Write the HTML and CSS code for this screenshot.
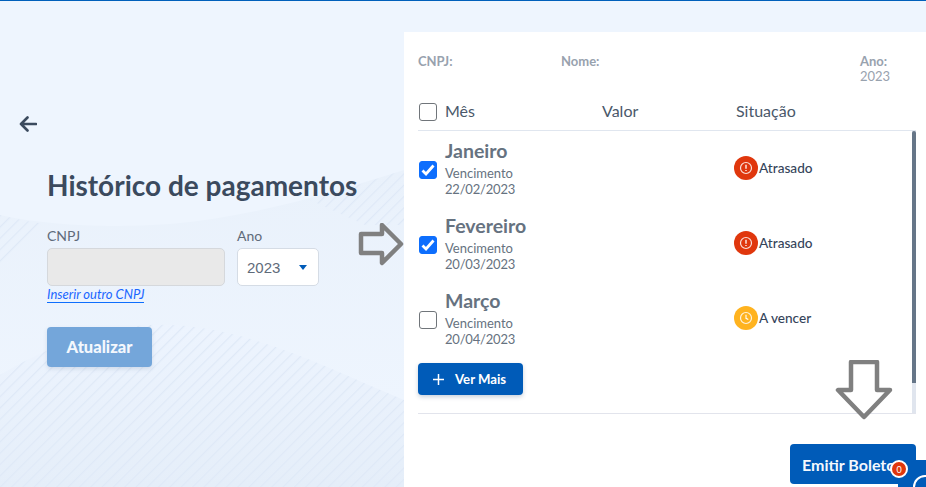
FILE: index.html
```html
<!DOCTYPE html>
<html lang="pt-BR">
<head>
<meta charset="utf-8">
<title>Histórico de pagamentos</title>
<link rel="stylesheet" href="styles.css">
</head>
<body>
<div class="page">
  <svg class="bg-art" width="404" height="487" viewBox="0 0 404 487" aria-hidden="true">
    <defs>
      <pattern id="hatch" width="8" height="8" patternUnits="userSpaceOnUse" patternTransform="rotate(45)">
        <rect width="1.300" height="8" fill="#dfe9f7"/>
      </pattern>
      <linearGradient id="fade" x1="0" y1="0" x2="0" y2="1">
        <stop offset="0" stop-color="#e9f1fb"/>
        <stop offset="1" stop-color="#eef5fe"/>
      </linearGradient>
      <linearGradient id="deep" x1="0" y1="0" x2="0" y2="1">
        <stop offset="0" stop-color="#edf4fe"/>
        <stop offset="1" stop-color="#e5eef9"/>
      </linearGradient>
    </defs>
    <path d="M0 215 C50 226 110 228 170 224 C260 216 340 190 404 170 V400 H0 Z" fill="url(#fade)"/>
    <path d="M0 375 C50 345 100 328 150 325 C240 322 320 365 404 400 V487 H0 Z" fill="url(#deep)"/>
    <path d="M0 375 C50 345 100 328 150 325 C240 322 320 365 404 400 V487 H0 Z" fill="url(#hatch)"/>
    <path d="M0 215 C15 219 30 222 45 224 L0 270 Z" fill="url(#hatch)"/>
    <path d="M310 200 C340 191 370 181 404 170 V225 L365 225 Z" fill="url(#hatch)"/>
  </svg>
  <main class="left">
    <button class="back" type="button" aria-label="Voltar">
      <svg width="18" height="16" viewBox="0 0 18 16"><path d="M17 8H2M8.500 1.500 2 8l6.500 6.500" fill="none" stroke="#3b4a5e" stroke-width="2.600" stroke-linecap="round" stroke-linejoin="round"/></svg>
    </button>
    <h1 class="title">Histórico de pagamentos</h1>
    <div class="fields">
      <div class="field">
        <label class="label">CNPJ</label>
        <div class="input"></div>
        <a class="link" href="#">Inserir outro CNPJ</a>
      </div>
      <div class="field">
        <label class="label">Ano</label>
        <div class="select"><span>2023</span><i class="caret"></i></div>
      </div>
    </div>
    <button class="btn-update" type="button">Atualizar</button>
  </main>
  <section class="panel">
    <div class="meta">
      <div class="meta-cnpj"><b>CNPJ:</b></div>
      <div class="meta-nome"><b>Nome:</b></div>
      <div class="meta-ano"><b>Ano:</b><br>2023</div>
    </div>
    <div class="head">
      <span class="check check-head"></span>
      <span class="col-mes">Mês</span>
      <span class="col-valor">Valor</span>
      <span class="col-sit">Situação</span>
    </div>
    <div class="list">
      <div class="rows">
        <div class="row">
          <span class="check check-row on"><svg width="14" height="12" viewBox="0 0 14 12"><path d="M1.500 6.500 5 10l7.500-8.500" fill="none" stroke="#fff" stroke-width="2.800"/></svg></span>
          <div class="month"><div class="name">Janeiro</div><div class="due">Vencimento<br><span class="date">22/02/2023</span></div></div>
          <div class="status"><span class="dot red"><svg width="14" height="14" viewBox="0 0 14 14"><circle cx="7" cy="7" r="5.500" fill="none" stroke="#fff" stroke-opacity=".85" stroke-width="1.200"/><path d="M7 3.800v3.900M7 9v1" stroke="#fff" stroke-width="1.300"/></svg></span>Atrasado</div>
        </div>
        <div class="row">
          <span class="check check-row on"><svg width="14" height="12" viewBox="0 0 14 12"><path d="M1.500 6.500 5 10l7.500-8.500" fill="none" stroke="#fff" stroke-width="2.800"/></svg></span>
          <div class="month"><div class="name">Fevereiro</div><div class="due">Vencimento<br><span class="date">20/03/2023</span></div></div>
          <div class="status"><span class="dot red"><svg width="14" height="14" viewBox="0 0 14 14"><circle cx="7" cy="7" r="5.500" fill="none" stroke="#fff" stroke-opacity=".85" stroke-width="1.200"/><path d="M7 3.800v3.900M7 9v1" stroke="#fff" stroke-width="1.300"/></svg></span>Atrasado</div>
        </div>
        <div class="row">
          <span class="check check-row"></span>
          <div class="month"><div class="name">Março</div><div class="due">Vencimento<br><span class="date">20/04/2023</span></div></div>
          <div class="status"><span class="dot amber"><svg width="14" height="14" viewBox="0 0 14 14"><circle cx="7" cy="7" r="5.500" fill="none" stroke="#fff" stroke-opacity=".85" stroke-width="1.200"/><path d="M7 3.800V7.300L9.300 8.500" fill="none" stroke="#fff" stroke-width="1.100"/></svg></span>A vencer</div>
        </div>
        <button class="btn-more" type="button"><svg width="11" height="11" viewBox="0 0 11 11"><path d="M5.500 0v11M0 5.500h11" stroke="#fff" stroke-width="1.500"/></svg>Ver Mais</button>
      </div>
      <div class="scroll"><div class="thumb"></div></div>
    </div>
    <div class="actions"><button class="btn-emit" type="button">Emitir Boleto</button></div>
  </section>
  <svg class="arrow arrow-right" width="46" height="44" viewBox="0 0 46 44" aria-hidden="true"><path d="M3 11H24V2L43 21 24 40V30H3Z" fill="none" stroke="#808080" stroke-width="4.500" stroke-linejoin="round"/></svg>
  <svg class="arrow arrow-down" width="58" height="60" viewBox="0 0 58 60" aria-hidden="true"><path d="M16 2H42V30H55L29 57 3 30H16Z" fill="none" stroke="#808080" stroke-width="4.500" stroke-linejoin="round"/></svg>
  <div class="chat"><span class="chat-ring"></span></div>
  <span class="badge">0</span>
</div>
</body>
</html>
```
FILE: styles.css
```css
* { box-sizing: border-box; }
html, body { margin: 0; height: 100%; }
body { font-family: Lato, "Open Sans", sans-serif; color: #3b4a5e; overflow: hidden; }
button { font-family: inherit; border: 0; cursor: pointer; }

.page {
  position: relative;
  display: flex;
  width: 926px;
  height: 487px;
  padding-top: 31px;
  overflow: hidden;
  background: #eef5fe;
  border-top: 1px solid #0060bb;
}
.bg-art { position: absolute; left: 0; top: -1px; }

.left { position: relative; width: 404px; padding: 84px 0 0 19px; }
.back { display: block; padding: 0; width: 18px; height: 16px; background: none; line-height: 0; }
.title { margin: 36px 0 0 28px; font-size: 28px; line-height: 34px; font-weight: 700; color: #3b4a5e; }
.fields { display: flex; gap: 12px; margin: 25px 0 0 28px; }
.label { display: block; font-size: 14px; line-height: 17px; color: #5f6b7a; }
.input { width: 178px; height: 38px; margin-top: 4px; background: #e9e9e9; border: 1px solid #d5d8dc; border-radius: 5px; }
.link { display: block; margin-top: 0; width: max-content; font-size: 13px; line-height: 16px; font-style: italic; color: #1a66ff; text-decoration: none; border-bottom: 1px solid #0d6efd; }
.select { display: flex; align-items: center; justify-content: space-between; width: 82px; height: 38px; margin-top: 4px; padding: 0 11px 0 9px; background: #fff; border: 1px solid #d5dce5; border-radius: 5px; font-size: 15px; font-family: "Liberation Sans", sans-serif; color: #5f6b7a; }
.caret { width: 0; height: 0; border-left: 4.500px solid transparent; border-right: 4.500px solid transparent; border-top: 5px solid #005bb8; }
.btn-update { display: block; width: 105px; height: 40px; margin: 24px 0 0 28px; background: #74a6da; color: #f4f8fd; font-size: 16.500px; font-weight: 900; border-radius: 4px; box-shadow: 0 2px 4px rgba(60, 90, 130, .15); }

.panel { position: relative; flex: 1; padding: 22px 10px 0 14px; background: #fff; }
.meta { display: flex; height: 39px; font-size: 13px; line-height: 15px; color: #98a2ae; }
.meta b { font-weight: 700; }
.meta-cnpj { width: 143px; }
.meta-nome { width: 299px; }
.head { display: flex; align-items: center; height: 38px; padding-bottom: 3px; padding-left: 1px; border-bottom: 1px solid #e0e6ef; font-size: 16px; color: #4a586a; }
.check { flex: none; display: flex; align-items: center; justify-content: center; width: 18px; height: 18px; background: #fff; border: 1px solid #70757a; border-radius: 3px; }
.check.on { background: #0d6efd; border-color: #0d6efd; }
.check-head { margin-top: 4px; }
.check-row { margin-top: 3px; }
.col-mes { width: 157px; margin-left: 8px; }
.col-valor { width: 134px; }
.list { display: flex; height: 283px; border-bottom: 1px solid #e2e4ec; }
.rows { flex: 1; }
.row { display: flex; align-items: center; height: 75px; padding-left: 1px; }
.month { width: 289px; margin: -2px 0 0 8px; }
.name { margin-bottom: 1px; font-size: 19.500px; line-height: 26px; font-weight: 700; color: #667280; }
.due { font-size: 13px; line-height: 16px; color: #667280; }
.date { letter-spacing: -.2px; }
.status { display: flex; align-items: center; gap: 1px; margin-top: -1px; font-size: 13.600px; font-weight: 500; color: #35445a; }
.dot { display: flex; align-items: center; justify-content: center; width: 24px; height: 24px; border-radius: 50%; }
.red { background: #e0370d; }
.amber { background: #ffb31f; }
.btn-more { display: flex; align-items: center; gap: 11px; width: 105px; height: 32px; margin-top: 7px; padding: 0 0 0 15px; background: #005bb8; color: #fff; font-size: 13.200px; font-weight: 700; border-radius: 4px; box-shadow: 0 2px 4px rgba(40, 70, 110, .25); }
.scroll { flex: none; width: 4px; background: #e0e5ee; }
.thumb { height: 252px; background: #667688; border-radius: 2px 2px 0 0; }
.actions { display: flex; justify-content: flex-end; margin-top: 30px; }
.btn-emit { width: 126px; height: 40px; padding: 0 0 0 12px; text-align: left; background: #005bb8; color: #f4f8fd; font-size: 16px; font-weight: 700; border-radius: 4px; }

.arrow { position: absolute; }
.arrow-right { left: 358px; top: 222px; }
.arrow-down { left: 835px; top: 359px; }
.chat { position: absolute; left: 898px; top: 459px; width: 40px; height: 40px; background: #005bb8; border-radius: 4px 0 0 0; }
.chat-ring { position: absolute; left: 15px; top: 15px; width: 24px; height: 24px; border: 2px solid #fff; border-radius: 50%; }
.badge { position: absolute; left: 890px; top: 459px; display: flex; align-items: center; justify-content: center; width: 18px; height: 18px; background: #e0370d; border: 2px solid #fff; border-radius: 50%; color: #fff; font-size: 9px; }
```
